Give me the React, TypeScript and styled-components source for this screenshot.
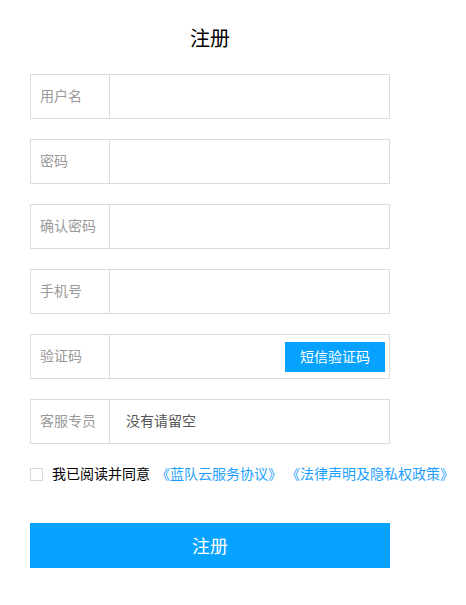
import React from 'react'
import styled, { createGlobalStyle } from 'styled-components'

const GlobalStyle = createGlobalStyle`
  html, body {
    margin: 0;
    padding: 0;
    background: #fff;
    font-family: "Noto Sans CJK SC", "Noto Sans", sans-serif;
  }
`

const Page = styled.div`
  width: 360px;
  padding: 24px 0 0 30px;
`

const Title = styled.h1`
  margin: 0 0 23px;
  height: 27px;
  line-height: 27px;
  text-align: center;
  font-size: 20px;
  font-weight: 400;
  color: #000;
`

const Form = styled.form`
  display: flex;
  flex-direction: column;
  gap: 20px;
`

const Field = styled.div`
  display: flex;
  align-items: center;
  height: 45px;
  box-sizing: border-box;
  border: 1px solid #dcdcdc;
`

const Label = styled.label`
  width: 79px;
  height: 100%;
  box-sizing: border-box;
  padding: 0 0 3px 9px;
  border-right: 1px solid #dcdcdc;
  display: flex;
  align-items: center;
  font-size: 14px;
  color: #999;
`

const Input = styled.input`
  flex: 1;
  height: 100%;
  min-width: 0;
  box-sizing: border-box;
  border: 0;
  outline: none;
  padding: 0 0 3px 16px;
  font-family: inherit;
  font-size: 14px;
  color: #555;
  background: transparent;

  &::placeholder {
    color: #555;
  }
`

const SmsButton = styled.button`
  width: 100px;
  height: 30px;
  margin-right: 4px;
  border: 0;
  padding: 0 0 2px;
  background: #05a3ff;
  color: #fff;
  font-family: inherit;
  font-size: 14px;
  cursor: pointer;
`

const Agree = styled.div`
  display: flex;
  align-items: center;
  margin-top: -1px;
  height: 20px;
  white-space: nowrap;
  font-size: 14px;
  color: #000;
`

const Check = styled.span`
  width: 13px;
  height: 13px;
  box-sizing: border-box;
  border: 1px solid #d8d8d8;
  margin: 2px 9px 0 0;
  flex-shrink: 0;
`

const Link = styled.a`
  color: #1e9fff;
  text-decoration: none;
  margin-left: ${(p: { $gap?: number }) => p.$gap ?? 0}px;
`

const Submit = styled.button`
  margin-top: 20px;
  height: 45px;
  border: 0;
  padding: 0 0 2px;
  background: #05a3ff;
  color: #fff;
  font-family: inherit;
  font-size: 18px;
  cursor: pointer;
`

const fields = ['用户名', '密码', '确认密码', '手机号']

export default function App() {
  return (
    <>
      <GlobalStyle />
      <Page>
        <Title>注册</Title>
        <Form onSubmit={(e) => e.preventDefault()}>
          {fields.map((f) => (
            <Field key={f}>
              <Label>{f}</Label>
              <Input type={f.includes('密码') ? 'password' : 'text'} />
            </Field>
          ))}
          <Field>
            <Label>验证码</Label>
            <Input />
            <SmsButton type="button">短信验证码</SmsButton>
          </Field>
          <Field>
            <Label>客服专员</Label>
            <Input placeholder="没有请留空" />
          </Field>
          <Agree>
            <Check />
            我已阅读并同意
            <Link href="#" $gap={6}>《蓝队云服务协议》</Link>
            <Link href="#" $gap={4}>《法律声明及隐私权政策》</Link>
          </Agree>
          <Submit type="submit">注册</Submit>
        </Form>
      </Page>
    </>
  )
}
